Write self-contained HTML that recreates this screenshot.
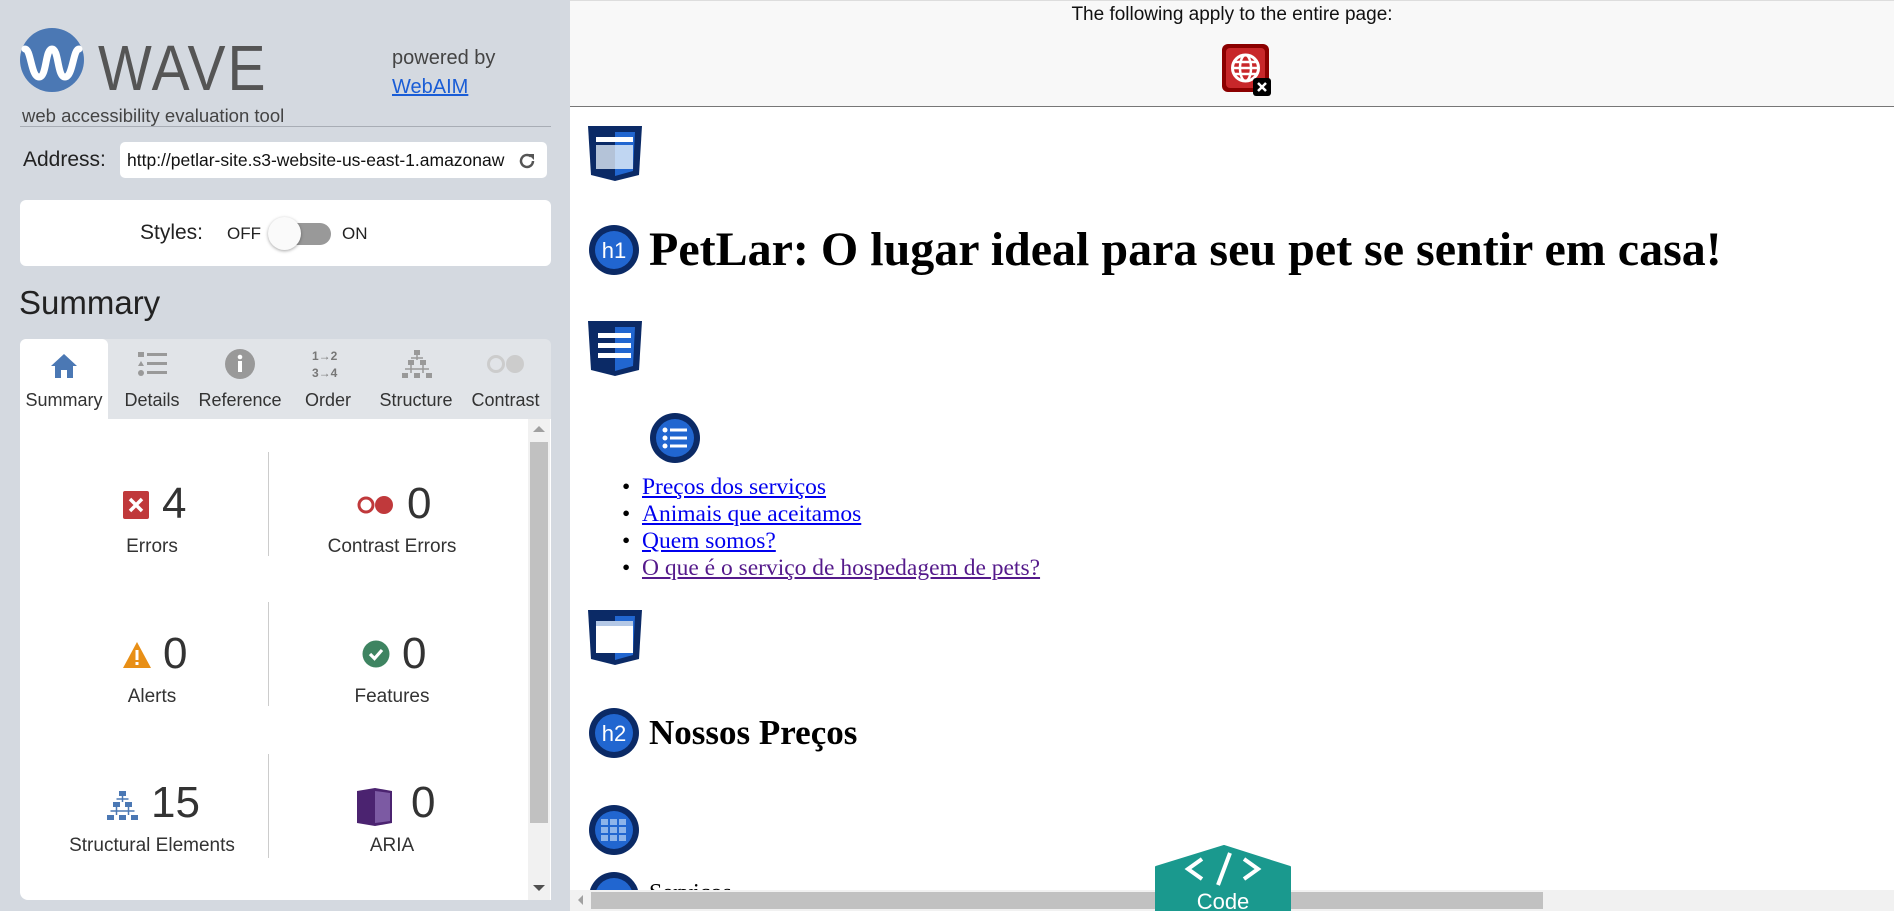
<!DOCTYPE html>
<html><head><meta charset="utf-8"><style>
*{box-sizing:border-box;margin:0;padding:0}
html,body{width:1894px;height:911px;overflow:hidden}
body{position:relative;font-family:"Liberation Sans",sans-serif;background:#fff}
.abs{position:absolute}
#side{left:0;top:0;width:570px;height:911px;background:#d4d9e0}
#main{left:570px;top:0;width:1324px;height:911px;background:#fff;overflow:hidden}
.tab{position:absolute;top:0;height:85px;text-align:center;font-size:18px;color:#333}
.tab .lbl{position:absolute;left:0;right:0;top:51px}
.num{font-size:44px;color:#333;position:absolute}
.lab{font-size:19px;color:#333;position:absolute;text-align:center;width:220px}
.vdiv{position:absolute;left:268px;width:1px;background:#ccc;height:104px}
.serif{font-family:"Liberation Serif",serif}
a{color:#0000ee}
</style></head><body>
<div id="side" class="abs">
  <svg class="abs" style="left:19px;top:27px" width="66" height="66" viewBox="0 0 66 66"><circle cx="33" cy="33" r="32" fill="#4b78b4"/><path d="M6 22 C12 22 12 50 20 50 C28 50 26 22 33 22 C40 22 38 50 46 50 C54 50 54 22 60 22" fill="none" stroke="#fff" stroke-width="7" stroke-linecap="round"/></svg>
  <div class="abs" style="left:98px;top:32px;font-size:57px;color:#555;letter-spacing:2px;transform:scaleY(1.12);transform-origin:top left">WAVE</div>
  <div class="abs" style="left:22px;top:105px;font-size:18.5px;color:#444">web accessibility evaluation tool</div>
  <div class="abs" style="left:392px;top:47px;font-size:20px;color:#444">powered by</div>
  <div class="abs" style="left:392px;top:76px;font-size:20px"><a href="#" style="color:#1a5dd6">WebAIM</a></div>
  <div class="abs" style="left:20px;top:126px;width:531px;height:1px;background:#a8adb5"></div>
  <div class="abs" style="left:23px;top:148px;font-size:21px;color:#222">Address:</div>
  <div class="abs" style="left:120px;top:142px;width:427px;height:36px;background:#fff;border-radius:5px;overflow:hidden">
    <div class="abs" style="left:7px;top:8px;font-size:17.5px;color:#111;white-space:nowrap;width:378px;overflow:hidden">http://petlar-site.s3-website-us-east-1.amazonaws.com</div>
    <svg class="abs" style="left:397px;top:9px" width="20" height="20" viewBox="0 0 20 20"><path d="M16 10a6 6 0 1 1-2-4.5" fill="none" stroke="#555" stroke-width="2.5"/><path d="M11 3h6v6z" fill="#555"/></svg>
  </div>
  <div class="abs" style="left:20px;top:200px;width:531px;height:66px;background:#fff;border-radius:6px">
    <div class="abs" style="left:120px;top:21px;font-size:21px;color:#222">Styles:</div>
    <div class="abs" style="left:207px;top:24px;font-size:17px;color:#222">OFF</div>
    <div class="abs" style="left:254px;top:23px;width:57px;height:22px;border-radius:11px;background:#999"></div>
    <div class="abs" style="left:248px;top:17px;width:33px;height:33px;border-radius:50%;background:#fafafa;box-shadow:0 1px 3px rgba(0,0,0,.35)"></div>
    <div class="abs" style="left:322px;top:24px;font-size:17px;color:#222">ON</div>
  </div>
  <div class="abs" style="left:19px;top:284px;font-size:33px;color:#222">Summary</div>
  <div class="abs" style="left:20px;top:339px;width:531px;height:80px;background:#e1e4e8;border-radius:6px 6px 0 0">
    <div class="tab" style="left:0;width:88px;background:#fff;border-radius:6px 6px 0 0">
      <svg class="abs" style="left:29px;top:13px" width="30" height="28" viewBox="0 0 30 28"><path d="M15 2 L28 14 H24 V26 H18 V18 H12 V26 H6 V14 H2Z" fill="#4b78b4"/></svg><div class="lbl">Summary</div></div>
    <div class="tab" style="left:88px;width:88px">
      <svg class="abs" style="left:30px;top:12px" width="30" height="26" viewBox="0 0 30 26"><rect x="0" y="1" width="6" height="5" fill="#999"/><path d="M0 15 L3 10 L6 15Z" fill="#999"/><circle cx="3" cy="22" r="3" fill="#999"/><rect x="9" y="2" width="20" height="3" fill="#999"/><rect x="9" y="11" width="20" height="3" fill="#999"/><rect x="9" y="20" width="20" height="3" fill="#999"/></svg><div class="lbl">Details</div></div>
    <div class="tab" style="left:176px;width:88px">
      <svg class="abs" style="left:29px;top:10px" width="30" height="30" viewBox="0 0 30 30"><circle cx="15" cy="15" r="15" fill="#999"/><rect x="13" y="12" width="4" height="11" fill="#fff"/><circle cx="15" cy="8" r="2.3" fill="#fff"/></svg><div class="lbl">Reference</div></div>
    <div class="tab" style="left:264px;width:88px">
      <div class="abs" style="left:28px;top:9px;font-size:12px;color:#777;line-height:17px;text-align:left;font-weight:bold">1→2<br>3→4</div><div class="lbl">Order</div></div>
    <div class="tab" style="left:352px;width:88px">
      <svg class="abs" style="left:29px;top:10px" width="32" height="32" viewBox="0 0 32 32" fill="#999"><rect x="13" y="1" width="6" height="5"/><rect x="7" y="11" width="6" height="5"/><rect x="19" y="11" width="6" height="5"/><rect x="1" y="24" width="6" height="5"/><rect x="13" y="24" width="6" height="5"/><rect x="25" y="24" width="6" height="5"/><path d="M16 6v5M10 16v8M22 16v8M4 20h24M10 9h12" stroke="#999" stroke-width="1.5"/></svg><div class="lbl">Structure</div></div>
    <div class="tab" style="left:440px;width:91px">
      <svg class="abs" style="left:26px;top:15px" width="40" height="20" viewBox="0 0 40 20"><circle cx="10" cy="10" r="7.5" fill="none" stroke="#ccc" stroke-width="3"/><circle cx="29" cy="10" r="9" fill="#ccc"/></svg><div class="lbl">Contrast</div></div>
  </div>
  <div class="abs" style="left:20px;top:419px;width:531px;height:481px;background:#fff;border-radius:0 0 0 8px">
    <div class="abs" style="left:508px;top:0;width:22px;height:481px;background:#f1f1f1"></div>
    <div class="abs" style="left:510px;top:23px;width:18px;height:381px;background:#c1c1c1"></div>
    <div class="abs" style="left:513px;top:7px;border:6px solid transparent;border-bottom:6px solid #a0a0a0;border-top:0"></div>
    <div class="abs" style="left:513px;top:466px;border:6px solid transparent;border-top:6px solid #505050;border-bottom:0"></div>
    <div class="vdiv" style="top:33px;left:248px"></div><div class="vdiv" style="top:183px;left:248px"></div><div class="vdiv" style="top:335px;left:248px"></div>
    <svg class="abs" style="left:103px;top:72px" width="26" height="28" viewBox="0 0 26 28"><rect width="26" height="28" rx="2" fill="#c0393b"/><path d="M7 8l12 12M19 8l-12 12" stroke="#fff" stroke-width="3.5"/></svg>
    <div class="num" style="left:142px;top:60px">4</div>
    <div class="lab" style="left:22px;top:117px">Errors</div>
    <svg class="abs" style="left:337px;top:74px" width="37" height="24" viewBox="0 0 37 24"><circle cx="9" cy="12" r="7" fill="none" stroke="#c0393b" stroke-width="3"/><circle cx="27" cy="12" r="9" fill="#c0393b"/></svg>
    <div class="num" style="left:387px;top:60px">0</div>
    <div class="lab" style="left:262px;top:117px">Contrast Errors</div>
    <svg class="abs" style="left:102px;top:222px" width="30" height="28" viewBox="0 0 30 28"><path d="M15 1 L29 27 H1Z" fill="#e88f16"/><rect x="13.5" y="9" width="3" height="10" fill="#fff"/><rect x="13.5" y="21" width="3" height="3" fill="#fff"/></svg>
    <div class="num" style="left:143px;top:210px">0</div>
    <div class="lab" style="left:22px;top:267px">Alerts</div>
    <svg class="abs" style="left:342px;top:221px" width="28" height="28" viewBox="0 0 28 28"><circle cx="14" cy="14" r="13.5" fill="#3e8461"/><path d="M8 14l4.5 4.5L20 10" fill="none" stroke="#fff" stroke-width="3.2"/></svg>
    <div class="num" style="left:382px;top:210px">0</div>
    <div class="lab" style="left:262px;top:267px">Features</div>
    <svg class="abs" style="left:87px;top:371px" width="32" height="32" viewBox="0 0 32 32" fill="#4b78b4"><rect x="12" y="1" width="7" height="5"/><rect x="6" y="12" width="7" height="5"/><rect x="18" y="12" width="7" height="5"/><rect x="0" y="25" width="7" height="5"/><rect x="12" y="25" width="7" height="5"/><rect x="24" y="25" width="7" height="5"/><path d="M15.5 6v6M9.5 17v8M21.5 17v8M3.5 21h24M9.5 9h12" stroke="#4b78b4" stroke-width="1.5" fill="none"/></svg>
    <div class="num" style="left:131px;top:359px">15</div>
    <div class="lab" style="left:22px;top:416px">Structural Elements</div>
    <svg class="abs" style="left:337px;top:369px" width="36" height="38" viewBox="0 0 36 38"><path d="M0 3 L18 0 L35 3 V35 L18 38 L0 35Z" fill="#4b2370"/><path d="M18 3 L33 5 V33 L18 35Z" fill="#7c5aa3"/></svg>
    <div class="num" style="left:391px;top:359px">0</div>
    <div class="lab" style="left:262px;top:416px">ARIA</div>
  </div>
</div>
<div id="main" class="abs">
  <div class="abs" style="left:0;top:0;width:1324px;height:107px;background:#f8f8f8;border-bottom:1px solid #777;border-top:1px solid #ddd"></div>
  <div class="abs" style="left:0;width:1324px;top:4px;text-align:center;font-size:19px;color:#111">The following apply to the entire page:</div>
  <svg class="abs" style="left:651px;top:43px" width="52" height="54" viewBox="0 0 52 54"><rect x="1" y="1" width="47" height="48" rx="6" fill="#8b0000"/><rect x="5" y="5" width="39" height="40" rx="4" fill="#c8272a"/><circle cx="24.5" cy="25" r="13" fill="none" stroke="#fff" stroke-width="3"/><ellipse cx="24.5" cy="25" rx="5.5" ry="13" fill="none" stroke="#fff" stroke-width="2.5"/><path d="M11.5 25h26M13 19h23M13 31h23" stroke="#fff" stroke-width="2.5"/><rect x="32" y="35" width="18" height="18" rx="3" fill="#000"/><path d="M37 40l8 8M45 40l-8 8" stroke="#fff" stroke-width="2.5"/></svg>
  <svg class="abs" style="left:18px;top:126px" width="54" height="55" viewBox="0 0 54 55"><path d="M0 0H54L51 49L27 55L3 49Z" fill="#0b2a66"/><path d="M27 6H47L45 45L27 50Z" fill="#2166d0"/><rect x="8" y="11" width="37" height="5" fill="#fff"/><rect x="8" y="19" width="19" height="24" fill="#b4c3d8"/><rect x="27" y="19" width="18" height="24" fill="#c0d6f2"/></svg>
  <svg class="abs" style="left:19px;top:225px" width="50" height="50" viewBox="0 0 50 50"><circle cx="25" cy="25" r="25" fill="#0b2a66"/><circle cx="25" cy="25" r="19" fill="#2166d0"/><text x="25" y="33" text-anchor="middle" font-family="Liberation Sans" font-size="22" fill="#fff">h1</text></svg>
  <div class="abs serif" style="left:79px;top:222px;font-size:48px;font-weight:bold;color:#000;white-space:nowrap">PetLar: O lugar ideal para seu pet se sentir em casa!</div>
  <svg class="abs" style="left:18px;top:321px" width="54" height="55" viewBox="0 0 54 55"><path d="M0 0H54L51 49L27 55L3 49Z" fill="#0b2a66"/><path d="M27 6H47L45 45L27 50Z" fill="#2166d0"/><rect x="10" y="12" width="33" height="5" fill="#fff"/><rect x="10" y="22" width="33" height="5" fill="#fff"/><rect x="10" y="32" width="33" height="5" fill="#fff"/></svg>
  <svg class="abs" style="left:80px;top:413px" width="50" height="50" viewBox="0 0 50 50"><circle cx="25" cy="25" r="25" fill="#0b2a66"/><circle cx="25" cy="25" r="19" fill="#2166d0"/><g fill="#fff"><circle cx="15" cy="17" r="2.5"/><circle cx="15" cy="25" r="2.5"/><circle cx="15" cy="33" r="2.5"/><rect x="20" y="15.5" width="17" height="3"/><rect x="20" y="23.5" width="17" height="3"/><rect x="20" y="31.5" width="17" height="3"/></g></svg>
  <div class="abs serif" style="left:52px;top:474px;font-size:23.5px;line-height:27px;white-space:nowrap">
    <div>•&nbsp;&nbsp;<a href="#">Preços dos serviços</a></div>
    <div>•&nbsp;&nbsp;<a href="#">Animais que aceitamos</a></div>
    <div>•&nbsp;&nbsp;<a href="#">Quem somos?</a></div>
    <div>•&nbsp;&nbsp;<a href="#" style="color:#551a8b">O que é o serviço de hospedagem de pets?</a></div>
  </div>
  <svg class="abs" style="left:18px;top:610px" width="54" height="55" viewBox="0 0 54 55"><path d="M0 0H54L51 49L27 55L3 49Z" fill="#0b2a66"/><path d="M27 6H47L45 45L27 50Z" fill="#2166d0"/><rect x="8" y="11" width="37" height="5" fill="#b4c8e6"/><rect x="8" y="16" width="37" height="27" fill="#fff"/></svg>
  <svg class="abs" style="left:19px;top:708px" width="50" height="50" viewBox="0 0 50 50"><circle cx="25" cy="25" r="25" fill="#0b2a66"/><circle cx="25" cy="25" r="19" fill="#2166d0"/><text x="25" y="33" text-anchor="middle" font-family="Liberation Sans" font-size="22" fill="#fff">h2</text></svg>
  <div class="abs serif" style="left:79px;top:713px;font-size:35px;font-weight:bold;color:#000">Nossos Preços</div>
  <svg class="abs" style="left:19px;top:805px" width="50" height="50" viewBox="0 0 50 50"><circle cx="25" cy="25" r="25" fill="#0b2a66"/><circle cx="25" cy="25" r="19" fill="#2166d0"/><g fill="#8db4ea"><rect x="12" y="14" width="7" height="6"/><rect x="21" y="14" width="7" height="6"/><rect x="30" y="14" width="7" height="6"/><rect x="12" y="22" width="7" height="6"/><rect x="21" y="22" width="7" height="6"/><rect x="30" y="22" width="7" height="6"/><rect x="12" y="30" width="7" height="6"/><rect x="21" y="30" width="7" height="6"/><rect x="30" y="30" width="7" height="6"/></g></svg>
  <svg class="abs" style="left:19px;top:872px" width="50" height="50" viewBox="0 0 50 50"><circle cx="25" cy="25" r="25" fill="#0b2a66"/><circle cx="25" cy="25" r="19" fill="#2166d0"/></svg>
  <div class="abs serif" style="left:79px;top:880px;font-size:24px;color:#000">Serviços</div>
  <div class="abs" style="left:0;top:890px;width:1324px;height:21px;background:#f1f1f1"></div>
  <div class="abs" style="left:21px;top:892px;width:952px;height:17px;background:#c1c1c1"></div>
  <div class="abs" style="left:8px;top:895px;border:5px solid transparent;border-right:5px solid #a0a0a0;border-left:0"></div>
  <svg class="abs" style="left:584px;top:845px" width="140" height="66" viewBox="0 0 140 66"><path d="M2 22 L70 1 L136 22 V66 H2Z" fill="#1a998e" stroke="#1a998e" stroke-width="2" stroke-linejoin="round"/><path d="M48 14 L34 24 L48 34 M90 14 L104 24 L90 34 M76 8 L64 40" fill="none" stroke="#fff" stroke-width="4"/><text x="69" y="64" text-anchor="middle" font-family="Liberation Sans" font-size="22" fill="#fff">Code</text></svg>
</div>
</body></html>
